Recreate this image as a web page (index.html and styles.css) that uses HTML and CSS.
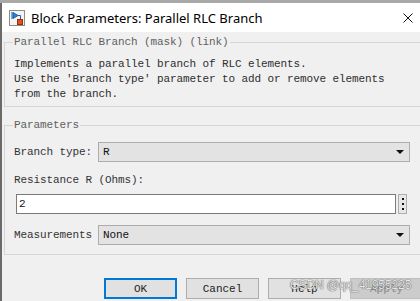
FILE: index.html
```html
<!DOCTYPE html>
<html lang="en">
<head>
    <meta charset="UTF-8">
    <title>Block Parameters: Parallel RLC Branch</title>
    <link rel="stylesheet" href="styles.css">
</head>
<body>
    <div class="top-strip"></div>
    <div class="window">
        <div class="titlebar">
            <svg class="app-icon" width="16" height="16" viewBox="0 0 16 16">
                <rect x="0.5" y="0.5" width="15" height="15" fill="#f4f4f4" stroke="#8c8c8c"/>
                <path d="M3 2 L3 9 M4 2.5 L9 5.5 L4 8.5 Z" fill="#2f7fd6" stroke="#1b5fb0" stroke-width="1"/>
                <path d="M9 5.5 H11.5 V9" fill="none" stroke="#1b5fb0"/>
                <rect x="8.5" y="9.5" width="5" height="5" fill="#e8501c" stroke="#9a2d08"/>
            </svg>
            <span class="title">Block Parameters: Parallel RLC Branch</span>
            <svg class="close" width="10" height="10" viewBox="0 0 10 10">
                <path d="M0.5 0.5 L9.5 9.5 M9.5 0.5 L0.5 9.5" stroke="#111" stroke-width="1"/>
            </svg>
        </div>

        <div class="content">
            <fieldset class="group">
                <legend>Parallel RLC Branch (mask) (link)</legend>
                <p class="desc">Implements a parallel branch of RLC elements.<br>Use the 'Branch type' parameter to add or remove elements<br>from the branch.</p>
            </fieldset>

            <fieldset class="group params">
                <legend>Parameters</legend>
                <div class="row">
                    <label class="row-label">Branch type:</label>
                    <div class="combo"><span>R</span><i class="arrow"></i></div>
                </div>
                <label class="field-label">Resistance R (Ohms):</label>
                <div class="row edit-row">
                    <input class="edit" type="text" value="2">
                    <div class="more"><b></b><b></b><b></b></div>
                </div>
                <div class="row last">
                    <label class="row-label">Measurements</label>
                    <div class="combo"><span>None</span><i class="arrow"></i></div>
                </div>
            </fieldset>

            <div class="buttons">
                <button class="btn default">OK</button>
                <button class="btn">Cancel</button>
                <button class="btn">Help</button>
                <button class="btn disabled">Apply</button>
            </div>
        </div>
    </div>
    <div class="watermark">CSDN @qq_41955225</div>
</body>
</html>
```

FILE: styles.css
```css
body {
    margin: 0;
    width: 420px;
    height: 301px;
    overflow: hidden;
    position: relative;
    background-color: #f0f0f0;
    font-family: 'Liberation Mono', monospace;
    font-size: 11px;
    letter-spacing: -0.1px;
    color: #333;
}

.top-strip {
    height: 3px;
    background-color: #a9a9a9;
}

.window {
    height: 298px;
    border-left: 2px solid #6a6a6a;
}

.titlebar {
    height: 29px;
    background-color: #fff;
    display: flex;
    align-items: center;
    padding: 0 7px 0 7px;
}

.app-icon {
    margin-top: 1px;
}

.title {
    margin-left: 6px;
    font-family: 'Noto Sans', sans-serif;
    font-size: 13px;
    letter-spacing: 0;
    color: #000;
}

.close {
    margin-left: auto;
}

/* groups */
.group {
    margin: 3px -4px 0 2px;
    padding: 7px 10px 4px 9px;
    border: 1px solid #d5d5d5;
    min-width: 0;
}

.group legend {
    margin-left: -1px;
    padding: 0 1px;
    line-height: 15px;
    color: #606060;
}

.desc {
    margin: 0;
    line-height: 15px;
    color: #2e2e2e;
}

.params {
    margin-top: 11px;
    padding-top: 9px;
    padding-bottom: 9px;
}

.row {
    display: flex;
    align-items: center;
    height: 20px;
}

.row-label {
    width: 84px;
    line-height: 15px;
}

.field-label {
    display: block;
    margin-top: 11px;
    line-height: 15px;
}

.edit-row {
    margin-top: 6px;
}

.row.last {
    margin-top: 11px;
}

.combo {
    width: 312px;
    height: 20px;
    box-sizing: border-box;
    border: 1px solid #adadad;
    background-color: #e3e3e3;
    display: flex;
    align-items: center;
    padding: 0 5px 0 4px;
    color: #111;
}

.arrow {
    margin-left: auto;
    width: 0;
    height: 0;
    border-left: 4px solid transparent;
    border-right: 4px solid transparent;
    border-top: 4px solid #111;
}

.edit {
    margin: 0 0 0 2px;
    width: 380px;
    height: 20px;
    box-sizing: border-box;
    border: 1px solid #7a7a7a;
    background-color: #fff;
    padding: 0 2px;
    font-family: 'Liberation Mono', monospace;
    font-size: 11px;
    color: #111;
    outline: none;
}

.more {
    margin-left: 2px;
    width: 9px;
    height: 20px;
    box-sizing: border-box;
    border: 1px solid #adadad;
    background-color: #e8e8e8;
    display: flex;
    flex-direction: column;
    align-items: center;
    justify-content: center;
    gap: 3px;
}

.more b {
    width: 2px;
    height: 2px;
    background-color: #111;
}

/* dialog buttons */
.buttons {
    display: flex;
    gap: 9px;
    margin-top: 23px;
    padding-left: 102px;
}

.btn {
    flex: none;
    width: 73px;
    height: 21px;
    padding: 0;
    border: 1px solid #adadad;
    background-color: #e1e1e1;
    font-family: 'Liberation Mono', monospace;
    font-size: 11px;
    color: #222;
}

.btn.default {
    border: 2px solid #0078d7;
}

.btn.disabled {
    background-color: #cccccc;
    border-color: #bfbfbf;
    color: #8a8a8a;
}

.watermark {
    position: absolute;
    left: 290px;
    top: 278px;
    font-family: 'Liberation Sans', sans-serif;
    font-size: 12px;
    color: rgba(255, 255, 255, 0.85);
    text-shadow: 0 0 1px #555, 0 0 1px #555;
}
```
